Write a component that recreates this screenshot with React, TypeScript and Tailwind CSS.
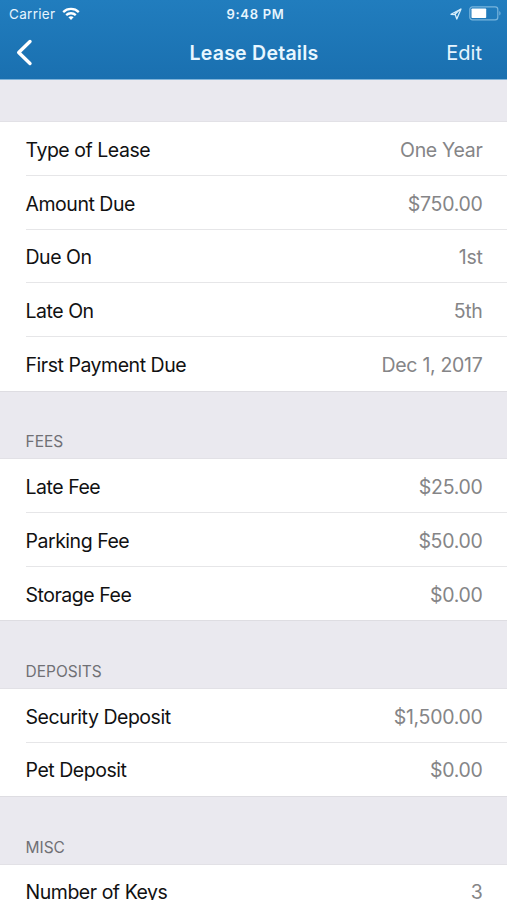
type Item = { label: string; value: string };
type Group = { title?: string; items: Item[] };

const groups: Group[] = [
  {
    items: [
      { label: "Type of Lease", value: "One Year" },
      { label: "Amount Due", value: "$750.00" },
      { label: "Due On", value: "1st" },
      { label: "Late On", value: "5th" },
      { label: "First Payment Due", value: "Dec 1, 2017" },
    ],
  },
  {
    title: "FEES",
    items: [
      { label: "Late Fee", value: "$25.00" },
      { label: "Parking Fee", value: "$50.00" },
      { label: "Storage Fee", value: "$0.00" },
    ],
  },
  {
    title: "DEPOSITS",
    items: [
      { label: "Security Deposit", value: "$1,500.00" },
      { label: "Pet Deposit", value: "$0.00" },
    ],
  },
  { title: "MISC", items: [{ label: "Number of Keys", value: "3" }] },
];

function WifiIcon() {
  return (
    <svg width="18" height="14" viewBox="0 0 18 14" fill="none" stroke="#fff" strokeWidth="2.3">
      <path d="M1.2 5.1C5.5 0.9 12.5 0.9 16.8 5.1" />
      <path d="M4.2 8.2C6.9 5.6 11.1 5.6 13.8 8.2" />
      <path d="M9 13L6.4 10.3C7.9 8.9 10.1 8.9 11.6 10.3Z" fill="#fff" stroke="none" />
    </svg>
  );
}

function LocationIcon() {
  return (
    <svg width="12" height="12" viewBox="0 0 12 12" fill="none" stroke="#d8eefb" strokeWidth="1.3" strokeLinejoin="round">
      <path d="M11 1L1 6.3L5.3 6.7L6.8 11Z" />
      <path d="M11 1L5.3 6.7L4.6 4.9Z" fill="#d8eefb" strokeWidth="0.5" />
    </svg>
  );
}

function BatteryIcon() {
  return (
    <svg width="33" height="15" viewBox="0 0 33 15">
      <rect x="0.8" y="0.8" width="28" height="13" rx="2.6" fill="none" stroke="#78b5dd" strokeWidth="1.2" />
      <rect x="2.5" y="2.5" width="14.7" height="9.6" rx="0.8" fill="#fff" />
      <path d="M30.3 5C32 5.8 32 8.8 30.3 9.6Z" fill="#78b5dd" />
    </svg>
  );
}

function Header() {
  return (
    <header className="h-20 border-b border-[#80b4da] bg-linear-to-b from-[#217dbe] to-[#1a70b0] text-white">
      <div className="grid h-[27px] grid-cols-3 items-center pl-[9px] pr-[5px] text-[13.5px] text-[#e6f5fe]">
        <div className="flex items-center gap-[7px] tracking-[0.3px]">
          <span className="pt-px">Carrier</span>
          <WifiIcon />
        </div>
        <span className="pt-[2px] text-center text-[13px] font-semibold tracking-[0.7px]">9:48 PM</span>
        <div className="flex items-center justify-end gap-[7px]">
          <LocationIcon />
          <BatteryIcon />
        </div>
      </div>
      <div className="grid h-[52px] grid-cols-[1fr_auto_1fr] items-center pl-4 pr-[25px] text-[19.5px]">
        <svg width="18" height="28" viewBox="0 0 18 28" fill="none" stroke="#fff" strokeWidth="3.4" strokeLinecap="round" strokeLinejoin="round" className="-mt-px">
          <path d="M14 2.5L2.7 13.5L14 24.5" />
        </svg>
        <h1 className="pl-[10px] pt-px font-semibold tracking-[0.25px] text-[#e8f7ff]">Lease Details</h1>
        <span className="text-right text-[20px] text-[#e6f5fe]">Edit</span>
      </div>
    </header>
  );
}

function Row({ item, last, single }: { item: Item; last: boolean; single: boolean }) {
  return (
    <div className="h-[53.7px] pl-[26px]">
      <div
        className={`flex h-full items-center justify-between border-b pr-[24.5px] text-[19.5px] ${single ? "pt-[2px]" : "pt-[4px]"} ${
          last ? "border-transparent" : "border-[#e6e6e8]"
        }`}
      >
        <span className="-ml-[0.5px] tracking-[-0.47px] text-[#111112]">{item.label}</span>
        <span className="tracking-[-0.3px] text-[#858587]">{item.value}</span>
      </div>
    </div>
  );
}

export default function App() {
  return (
    <main className="h-[900px] w-full overflow-hidden bg-[#eae9ef] font-['Inter','Liberation_Sans',sans-serif]">
      <Header />
      {groups.map((group, i) => (
        <section key={i}>
          {group.title ? (
            <h2 className="flex h-[68.6px] items-end pb-[6px] pl-[25.5px] text-[15.5px] text-[#707075]">{group.title}</h2>
          ) : (
            <div className="h-[42.4px]" />
          )}
          <div className="bg-white shadow-[0_-1px_0_#e2e1e6,0_1px_0_#dedde2]">
            {group.items.map((item, j) => (
              <Row key={item.label} item={item} last={j === group.items.length - 1} single={group.items.length === 1} />
            ))}
          </div>
        </section>
      ))}
    </main>
  );
}
